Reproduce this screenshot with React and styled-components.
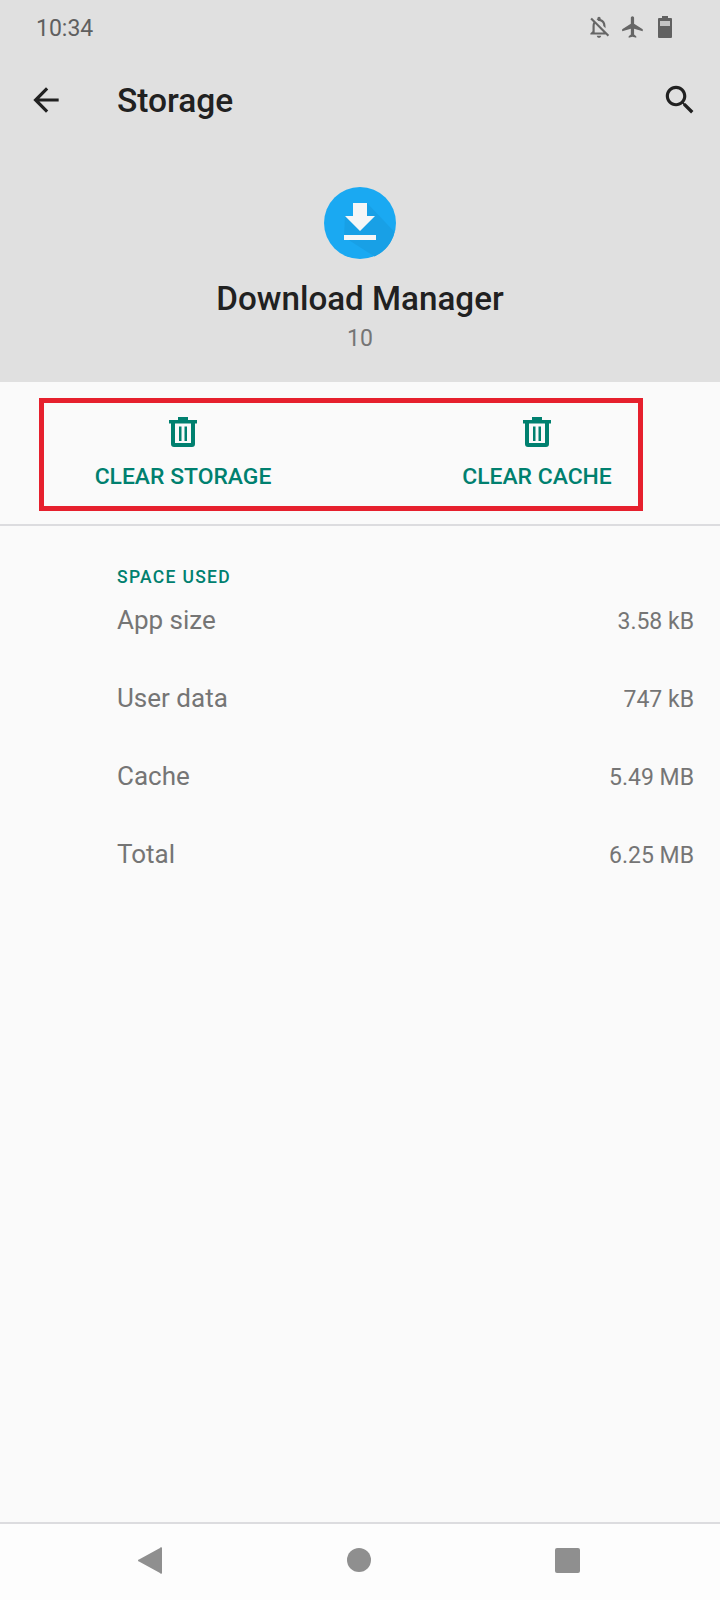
import React from 'react';
import styled, { createGlobalStyle } from 'styled-components';

const GlobalStyle = createGlobalStyle`
  html, body {
    margin: 0;
    padding: 0;
    background: #fafafa;
  }
  * {
    box-sizing: border-box;
  }
`;

const Screen = styled.div`
  width: 720px;
  height: 1600px;
  display: flex;
  flex-direction: column;
  background: #fafafa;
  font-family: Roboto, "Liberation Sans", sans-serif;
  overflow: hidden;
`;

const Header = styled.header`
  height: 382px;
  flex-shrink: 0;
  background: #e0e0e0;
  display: flex;
  flex-direction: column;
`;

const StatusBar = styled.div`
  height: 56px;
  padding: 0 48px 0 36px;
  display: flex;
  align-items: center;
  justify-content: space-between;
`;

const Clock = styled.span`
  font-size: 23px;
  color: #5f5f5f;
`;

const StatusIcons = styled.div`
  display: flex;
  align-items: center;
  gap: 8px;
  margin-top: -2px;
  color: #666;
`;

const BatterySvg = styled.svg`
  margin-left: 4px;
`;

const Toolbar = styled.div`
  height: 88px;
  padding: 0 21px 0 27px;
  display: flex;
  align-items: center;
`;

const Title = styled.h1`
  margin: 0 0 0 52px;
  flex: 1;
  font-size: 33.5px;
  font-weight: 500;
  color: #212121;
`;

const AppInfo = styled.div`
  display: flex;
  flex-direction: column;
  align-items: center;
  padding-top: 43px;
`;

const AppName = styled.div`
  margin-top: 18px;
  font-size: 33.2px;
  line-height: 44px;
  font-weight: 500;
  color: #212121;
`;

const AppVersion = styled.div`
  margin-top: 5px;
  font-size: 23px;
  line-height: 26px;
  color: #757575;
`;

const Actions = styled.section`
  position: relative;
  height: 144px;
  flex-shrink: 0;
  padding: 35px 5px 0 6px;
  display: grid;
  grid-template-columns: 354px 354px;
  align-content: start;
  border-bottom: 2px solid #dcdcdf;
`;

const ActionButton = styled.div`
  display: flex;
  flex-direction: column;
  align-items: center;
  gap: 17px;
  color: #00806f;
`;

const ActionLabel = styled.span`
  font-size: 22.9px;
  line-height: 26px;
  font-weight: 500;
`;

const Highlight = styled.div`
  position: absolute;
  left: 39px;
  top: 16px;
  width: 604px;
  height: 113px;
  border: 5px solid #e6202d;
  pointer-events: none;
`;

const Content = styled.main`
  flex: 1;
  padding: 41px 26px 0 117px;
`;

const SectionLabel = styled.div`
  font-size: 17.5px;
  line-height: 20px;
  font-weight: 500;
  letter-spacing: 1.3px;
  color: #00806f;
`;

const Row = styled.div`
  height: 78px;
  padding-top: 16px;
  display: flex;
  justify-content: space-between;
  align-items: baseline;
  color: #757575;
`;

const RowLabel = styled.span`
  font-size: 26px;
  line-height: 34px;
`;

const RowValue = styled.span`
  font-size: 23px;
  line-height: 34px;
`;

const NavBar = styled.nav`
  height: 78px;
  flex-shrink: 0;
  background: #fdfdfd;
  border-top: 2px solid #dcdcdf;
  display: flex;
  align-items: center;
  justify-content: space-between;
  padding: 0 140px 4px 138px;
`;

const Circle = styled.div`
  width: 24px;
  height: 24px;
  border-radius: 50%;
  background: #8f8f8f;
`;

const Square = styled.div`
  width: 25px;
  height: 25px;
  border-radius: 2px;
  background: #8f8f8f;
`;

const BellOffIcon = () => (
  <svg width="26" height="26" viewBox="0 0 24 24" fill="currentColor">
    <path d="M12 6.5c2.49 0 4 2.02 4 4.5v.1l2 2V11c0-3.07-1.63-5.64-4.5-6.32V4c0-.83-.67-1.5-1.5-1.5s-1.5.67-1.5 1.5v.68c-.24.06-.47.15-.69.23l1.64 1.64c.18-.02.36-.05.55-.05zM5.41 3.35L4 4.76l2.81 2.81C6.29 8.57 6 9.74 6 11v5l-2 2v1h14.24l1.74 1.74 1.41-1.41L5.41 3.35zM16 17H8v-6c0-.68.12-1.32.34-1.9L16 16.76V17zm-4 5c1.11 0 2-.89 2-2h-4c0 1.11.89 2 2 2z" />
  </svg>
);

const PlaneIcon = () => (
  <svg width="26" height="26" viewBox="0 0 24 24" fill="currentColor">
    <path d="M21 16v-2l-8-5V3.5c0-.83-.67-1.5-1.5-1.5S10 2.67 10 3.5V9l-8 5v2l8-2.5V19l-2 1.5V22l3.5-1 3.5 1v-1.5L13 19v-5.5l8 2.5z" />
  </svg>
);

const BatteryIcon = () => (
  <BatterySvg width="14" height="22" viewBox="0 0 14 22">
    <path d="M4 0h6v2h3a1 1 0 0 1 1 1v18a1 1 0 0 1-1 1H1a1 1 0 0 1-1-1V3a1 1 0 0 1 1-1h3z" fill="#616161" />
    <rect x="2" y="5" width="10" height="5" fill="#c4c4c4" />
  </BatterySvg>
);

const BackIcon = () => (
  <svg width="38" height="38" viewBox="0 0 24 24" fill="#212121">
    <path d="M20 11H7.83l5.59-5.59L12 4l-8 8 8 8 1.41-1.41L7.83 13H20v-2z" />
  </svg>
);

const SearchIcon = () => (
  <svg width="38" height="38" viewBox="0 0 24 24" fill="#212121">
    <path d="M15.5 14h-.79l-.28-.27C15.41 12.59 16 11.11 16 9.5 16 5.91 13.09 3 9.5 3S3 5.91 3 9.5 5.91 16 9.5 16c1.61 0 3.09-.59 4.23-1.57l.27.28v.79l5 4.99L20.49 19l-4.99-5zm-6 0C7.01 14 5 11.99 5 9.5S7.01 5 9.5 5 14 7.01 14 9.5 11.99 14 9.5 14z" />
  </svg>
);

const DownloadLogo = () => (
  <svg width="72" height="72" viewBox="0 0 72 72">
    <circle cx="36" cy="36" r="36" fill="#1aa9f2" />
    <path d="M43 16l27.5 29a36 36 0 0 1-20 24.500L20 50l1-21h8V16z" fill="#18a0e6" />
    <path d="M29 16h14v13h8L36 44 21 29h8z" fill="#f5f6f7" />
    <rect x="20" y="48" width="32" height="5" fill="#f5f6f7" />
  </svg>
);

const TrashIcon = () => (
  <svg width="28" height="30" viewBox="0 0 28 30" fill="currentColor">
    <path d="M9 0h10v3h9v3.500h-2V27a3 3 0 0 1-3 3H5a3 3 0 0 1-3-3V6.500H0V3h9zM6 6.500V26h16V6.500z" />
    <rect x="10" y="9.500" width="2.500" height="14.500" />
    <rect x="15.500" y="9.500" width="2.500" height="14.500" />
  </svg>
);

const NavBackIcon = () => (
  <svg width="24" height="27" viewBox="0 0 24 27">
    <path d="M22 1a1 1 0 0 1 2 .5v24a1 1 0 0 1-2 .6L1 14.500a1 1 0 0 1 0-2z" fill="#8f8f8f" />
  </svg>
);

const usage = [
  { label: 'App size', value: '3.58 kB' },
  { label: 'User data', value: '747 kB' },
  { label: 'Cache', value: '5.49 MB' },
  { label: 'Total', value: '6.25 MB' },
];

export default function App() {
  return (
    <Screen>
      <GlobalStyle />
      <Header>
        <StatusBar>
          <Clock>10:34</Clock>
          <StatusIcons>
            <BellOffIcon />
            <PlaneIcon />
            <BatteryIcon />
          </StatusIcons>
        </StatusBar>
        <Toolbar>
          <BackIcon />
          <Title>Storage</Title>
          <SearchIcon />
        </Toolbar>
        <AppInfo>
          <DownloadLogo />
          <AppName>Download Manager</AppName>
          <AppVersion>10</AppVersion>
        </AppInfo>
      </Header>

      <Actions>
        <ActionButton>
          <TrashIcon />
          <ActionLabel>CLEAR STORAGE</ActionLabel>
        </ActionButton>
        <ActionButton>
          <TrashIcon />
          <ActionLabel>CLEAR CACHE</ActionLabel>
        </ActionButton>
        <Highlight />
      </Actions>

      <Content>
        <SectionLabel>SPACE USED</SectionLabel>
        {usage.map((item) => (
          <Row key={item.label}>
            <RowLabel>{item.label}</RowLabel>
            <RowValue>{item.value}</RowValue>
          </Row>
        ))}
      </Content>

      <NavBar>
        <NavBackIcon />
        <Circle />
        <Square />
      </NavBar>
    </Screen>
  );
}
